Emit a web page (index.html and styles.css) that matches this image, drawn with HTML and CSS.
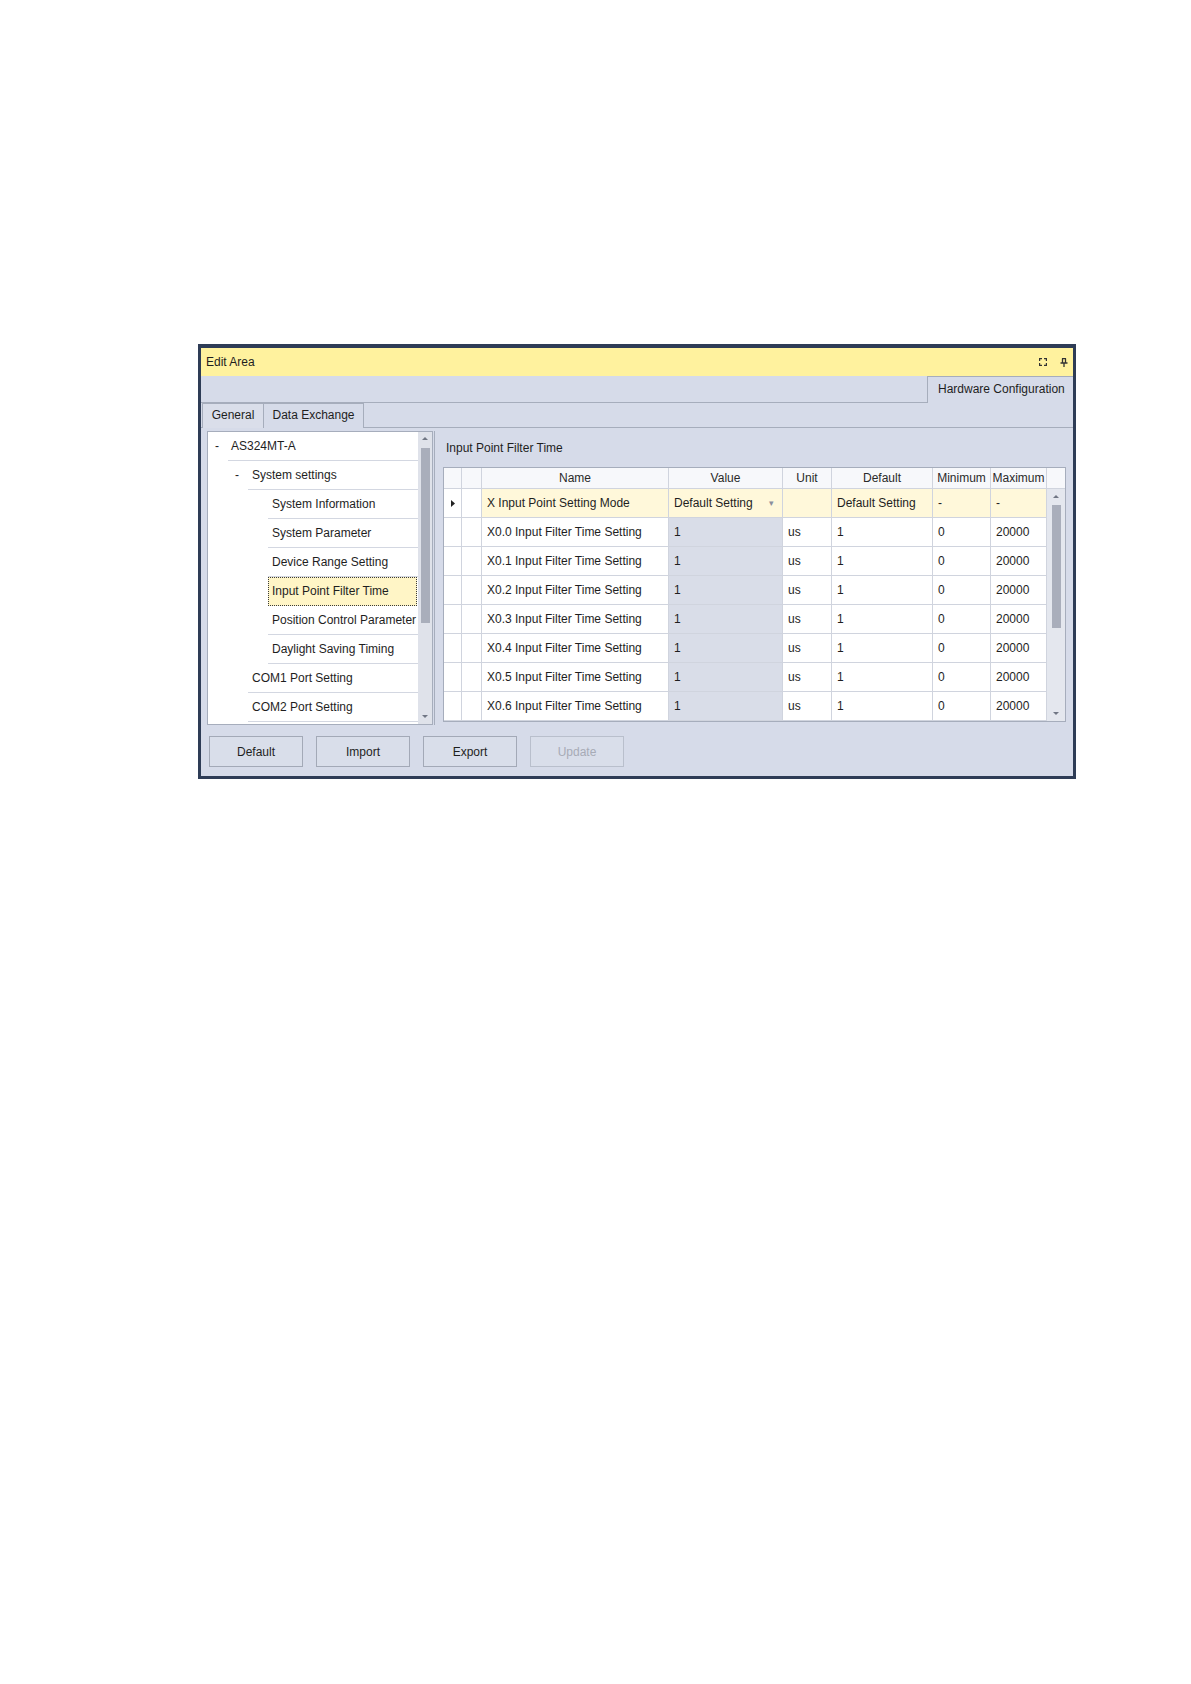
FILE: index.html
```html
<!DOCTYPE html>
<html lang="en">
<head>
  <meta charset="UTF-8">
  <title>Edit Area</title>
  <link rel="stylesheet" href="styles.css">
</head>
<body>
  <div class="page">
    <div class="window">
      <div class="titlebar">
        <span>Edit Area</span>
        <div class="title-icons">
          <svg width="8" height="8" viewBox="0 0 8 8"><path d="M0.5 3V0.5H3M5 0.5H7.5V3M7.5 5V7.5H5M3 7.5H0.5V5" fill="none" stroke="#333" stroke-width="1.4"/></svg>
          <svg width="8" height="9" viewBox="0 0 8 9"><path d="M2 0.5H6M2.5 0.5V5M5.5 0.5V5M0.5 5H7.5M4 5V9" fill="none" stroke="#333" stroke-width="1.3"/></svg>
        </div>
      </div>

      <div class="toolbar">
        <div class="hw-tab">Hardware Configuration</div>
      </div>

      <div class="tabs">
        <div class="tab tab-general">General</div>
        <div class="tab tab-exchange">Data Exchange</div>
      </div>

      <div class="content">
        <div class="tree">
          <div class="tree-list">
            <div class="node lvl0"><span class="toggle">-</span><span class="label">AS324MT-A</span></div>
            <div class="node lvl1"><span class="toggle">-</span><span class="label">System settings</span></div>
            <div class="node lvl2"><span class="toggle"></span><span class="label">System Information</span></div>
            <div class="node lvl2"><span class="toggle"></span><span class="label">System Parameter</span></div>
            <div class="node lvl2"><span class="toggle"></span><span class="label">Device Range Setting</span></div>
            <div class="node lvl2"><span class="toggle"></span><span class="label selected">Input Point Filter Time</span></div>
            <div class="node lvl2"><span class="toggle"></span><span class="label">Position Control Parameter</span></div>
            <div class="node lvl2"><span class="toggle"></span><span class="label">Daylight Saving Timing</span></div>
            <div class="node lvl1"><span class="toggle"></span><span class="label">COM1 Port Setting</span></div>
            <div class="node lvl1"><span class="toggle"></span><span class="label">COM2 Port Setting</span></div>
          </div>
          <div class="scroll tree-scroll">
            <span class="arrow up"></span>
            <div class="thumb"></div>
            <span class="arrow down"></span>
          </div>
        </div>

        <div class="detail">
          <div class="detail-title">Input Point Filter Time</div>
          <div class="grid">
            <div class="grid-body">
              <div class="row head">
                <div class="cell"></div>
                <div class="cell"></div>
                <div class="cell">Name</div>
                <div class="cell">Value</div>
                <div class="cell">Unit</div>
                <div class="cell">Default</div>
                <div class="cell">Minimum</div>
                <div class="cell">Maximum</div>
              </div>
              <div class="row current">
                <div class="cell ind"><svg width="4" height="7" viewBox="0 0 4 7"><path d="M0 0L4 3.5L0 7Z" fill="#222"/></svg></div>
                <div class="cell"></div>
                <div class="cell">X Input Point Setting Mode</div>
                <div class="cell value">Default Setting<span class="drop">&#9662;</span></div>
                <div class="cell"></div>
                <div class="cell">Default Setting</div>
                <div class="cell">-</div>
                <div class="cell">-</div>
              </div>
              <div class="row"><div class="cell"></div><div class="cell"></div><div class="cell">X0.0 Input Filter Time Setting</div><div class="cell value">1</div><div class="cell">us</div><div class="cell">1</div><div class="cell">0</div><div class="cell">20000</div></div>
              <div class="row"><div class="cell"></div><div class="cell"></div><div class="cell">X0.1 Input Filter Time Setting</div><div class="cell value">1</div><div class="cell">us</div><div class="cell">1</div><div class="cell">0</div><div class="cell">20000</div></div>
              <div class="row"><div class="cell"></div><div class="cell"></div><div class="cell">X0.2 Input Filter Time Setting</div><div class="cell value">1</div><div class="cell">us</div><div class="cell">1</div><div class="cell">0</div><div class="cell">20000</div></div>
              <div class="row"><div class="cell"></div><div class="cell"></div><div class="cell">X0.3 Input Filter Time Setting</div><div class="cell value">1</div><div class="cell">us</div><div class="cell">1</div><div class="cell">0</div><div class="cell">20000</div></div>
              <div class="row"><div class="cell"></div><div class="cell"></div><div class="cell">X0.4 Input Filter Time Setting</div><div class="cell value">1</div><div class="cell">us</div><div class="cell">1</div><div class="cell">0</div><div class="cell">20000</div></div>
              <div class="row"><div class="cell"></div><div class="cell"></div><div class="cell">X0.5 Input Filter Time Setting</div><div class="cell value">1</div><div class="cell">us</div><div class="cell">1</div><div class="cell">0</div><div class="cell">20000</div></div>
              <div class="row"><div class="cell"></div><div class="cell"></div><div class="cell">X0.6 Input Filter Time Setting</div><div class="cell value">1</div><div class="cell">us</div><div class="cell">1</div><div class="cell">0</div><div class="cell">20000</div></div>
              <div class="row"><div class="cell"></div><div class="cell"></div><div class="cell"></div><div class="cell value"></div><div class="cell"></div><div class="cell"></div><div class="cell"></div><div class="cell"></div></div>
            </div>
            <div class="grid-side">
              <div class="side-head"></div>
              <div class="scroll grid-scroll">
                <span class="arrow up"></span>
                <div class="thumb"></div>
                <span class="arrow down"></span>
              </div>
            </div>
          </div>
        </div>
      </div>

      <div class="buttons">
        <button>Default</button>
        <button>Import</button>
        <button>Export</button>
        <button class="disabled">Update</button>
      </div>
    </div>
  </div>
</body>
</html>
```

FILE: styles.css
```css
body {
  margin: 0;
  background: #ffffff;
  font-family: "Liberation Sans", Arial, sans-serif;
  font-size: 12px;
  color: #1e1e1e;
}
.page {
  padding: 344px 0 0 198px;
}
.window {
  width: 872px;
  border: 3px solid #2e3c56;
  border-top-width: 4px;
  background: #d6dbe9;
}
.titlebar {
  height: 28px;
  display: flex;
  align-items: center;
  justify-content: space-between;
  padding: 0 5px 0 5px;
  background: #fff29e;
}
.title-icons {
  display: flex;
  align-items: center;
  gap: 13px;
}
.title-icons svg {
  display: block;
}
.toolbar {
  height: 26px;
  display: flex;
  justify-content: flex-end;
  align-items: flex-end;
  border-bottom: 1px solid #a6adbc;
}
.hw-tab {
  box-sizing: border-box;
  width: 146px;
  height: 27px;
  margin-bottom: -1px;
  padding-left: 10px;
  line-height: 24px;
  border: 1px solid #a6adbc;
  border-bottom: none;
  border-right: none;
  background: #d6dbe9;
}
.tabs {
  height: 24px;
  display: flex;
  align-items: flex-end;
  padding-left: 1px;
  border-bottom: 1px solid #a6adbc;
}
.tab {
  box-sizing: border-box;
  height: 25px;
  margin-bottom: -1px;
  line-height: 23px;
  text-align: center;
  border: 1px solid #a6adbc;
  border-bottom: none;
  background: #d6dbe9;
}
.tab-general {
  width: 62px;
  background: #dadeea;
}
.tab-exchange {
  width: 100px;
  border-left: none;
}
.content {
  display: flex;
  padding: 3px 3px 0 6px;
  height: 294px;
}
.tree {
  box-sizing: border-box;
  width: 226px;
  height: 294px;
  display: flex;
  border: 1px solid #a6adbc;
  background: #ffffff;
}
.tree-list {
  flex: 1;
  overflow: hidden;
}
.node {
  display: flex;
  height: 29px;
}
.node.lvl0 { padding-left: 7px; }
.node.lvl1 { padding-left: 27px; }
.node.lvl2 { padding-left: 47px; }
.toggle {
  width: 13px;
  line-height: 28px;
}
.label {
  flex: 1;
  box-sizing: border-box;
  height: 29px;
  line-height: 28px;
  padding-left: 3px;
  white-space: nowrap;
  border-bottom: 1px solid #d3d7e1;
}
.node.lvl1 .label,
.node.lvl2 .label {
  padding-left: 4px;
}
.node.lvl2 .label.selected {
  padding-left: 3px;
  line-height: 27px;
  margin-right: 1px;
  background: #fff5c6;
  border: 1px dotted #3a3a3a;
}
.scroll {
  display: flex;
  flex-direction: column;
  align-items: center;
  background: #dfe2ea;
}
.tree-scroll {
  width: 14px;
}
.arrow {
  width: 0;
  height: 0;
  border-left: 3px solid transparent;
  border-right: 3px solid transparent;
}
.arrow.up {
  margin-top: 5px;
  border-bottom: 3px solid #707684;
}
.arrow.down {
  margin-top: auto;
  margin-bottom: 6px;
  border-top: 3px solid #707684;
}
.thumb {
  width: 9px;
  background: #a9aebb;
}
.tree-scroll .thumb {
  margin-top: 8px;
  height: 175px;
}
.detail {
  flex: 1;
  margin-left: 1px;
  padding-left: 8px;
  border-left: 1px solid #a6adbc;
}
.detail-title {
  height: 36px;
  line-height: 34px;
  padding-left: 3px;
}
.grid {
  width: 621px;
  height: 253px;
  display: flex;
  border: 1px solid #a6adbc;
  background: #ffffff;
  overflow: hidden;
}
.grid-body {
  width: 603px;
}
.row {
  display: grid;
  grid-template-columns: 18px 20px 187px 114px 49px 101px 58px 56px;
  height: 29px;
}
.row.head {
  height: 21px;
}
.cell {
  box-sizing: border-box;
  padding-left: 5px;
  line-height: 28px;
  white-space: nowrap;
  overflow: hidden;
  border-right: 1px solid #d0d4de;
  border-bottom: 1px solid #d0d4de;
}
.row.head .cell {
  padding-left: 0;
  line-height: 20px;
  text-align: center;
  background: #f7f8fb;
  color: #2a2a2a;
}
.row .cell:nth-child(-n+2) {
  padding-left: 0;
}
.cell.value {
  background: #d9dde8;
}
.row.current .cell:nth-child(n+3) {
  background: #fff8da;
}
.cell.ind {
  display: flex;
  align-items: center;
  justify-content: center;
}
.cell.value {
  display: flex;
  justify-content: space-between;
  padding-right: 8px;
}
.drop {
  color: #8a8f9c;
  font-size: 9px;
}
.grid-side {
  width: 18px;
  display: flex;
  flex-direction: column;
}
.side-head {
  box-sizing: border-box;
  height: 21px;
  background: #f7f8fb;
  border-bottom: 1px solid #d0d4de;
}
.grid-scroll {
  flex: 1;
  background: #e4e7ee;
}
.grid-scroll .arrow.up {
  margin-top: 6px;
}
.grid-scroll .thumb {
  margin-top: 7px;
  height: 123px;
}
.buttons {
  display: flex;
  gap: 13px;
  padding: 11px 0 9px 8px;
}
button {
  box-sizing: border-box;
  width: 94px;
  height: 31px;
  font-family: "Liberation Sans", Arial, sans-serif;
  font-size: 12px;
  color: #1e1e1e;
  background: #d9deea;
  border: 1px solid #a3a9b7;
  border-radius: 0;
}
button.disabled {
  color: #a7abb6;
  border-color: #b9bfcc;
}
```
